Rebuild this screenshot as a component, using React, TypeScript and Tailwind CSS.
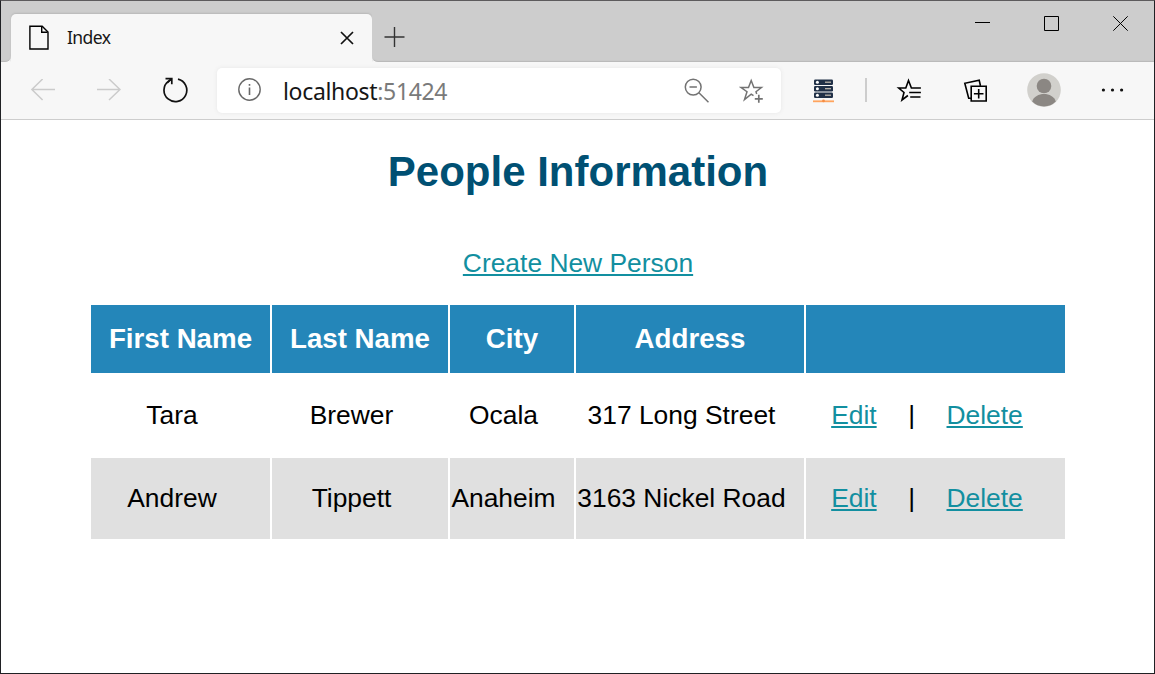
import type { ReactNode } from "react";

const people = [
  { first: "Tara", last: "Brewer", city: "Ocala", address: "317 Long Street" },
  { first: "Andrew", last: "Tippett", city: "Anaheim", address: "3163 Nickel Road" },
];

const columns = "grid grid-cols-[179px_176px_124px_228px_259px] gap-x-0.5";

function TabStrip() {
  return (
    <div className="flex h-[61px] shrink-0 bg-[#f7f7f7]">
      <div className="w-2.5 rounded-br-[6px] bg-[#cdcdcd] shadow-[inset_0_-2px_1px_-1px_#b9b9b9]" />
      <div className="w-[361px] bg-[#cdcdcd] pt-[13px]">
        <div className="flex h-full items-center rounded-t-[5px] bg-[#f7f7f7] pb-px pl-[17px] pr-[18px] shadow-[0_-1px_2px_#b8b8b8]">
          <svg width="21" height="25" viewBox="0 0 21 25" fill="none" stroke="#000" strokeWidth="1.4">
            <path d="M1.9 1.3H14.2L20 7V24H1.9Z" />
            <path d="M13.7 1.5V7.2H19.6" />
          </svg>
          <span className="ml-[18px] font-['Noto_Sans','Open_Sans',sans-serif] text-[17.5px] tracking-[-0.6px] text-[#161616]">Index</span>
          <svg className="ml-auto" width="14" height="14" viewBox="0 0 14 14" stroke="#111" strokeWidth="1.7">
            <path d="M1 1L13 13M13 1L1 13" />
          </svg>
        </div>
      </div>
      <div className="flex flex-1 rounded-bl-[6px] bg-[#cdcdcd] shadow-[inset_0_-2px_1px_-1px_#b9b9b9]">
        <svg className="ml-3 mt-[26px]" width="21" height="21" viewBox="0 0 21 21" stroke="#333" strokeWidth="1.4">
          <path d="M.5 10H20.5M10.5 0V20" />
        </svg>
        <div className="ml-auto mr-[26px] mt-[15px] flex h-4 gap-[54px]">
          <svg width="15" height="15" viewBox="0 0 15 15" stroke="#000"><path d="M0 6.5H15" /></svg>
          <svg width="15" height="15" viewBox="0 0 15 15" fill="none" stroke="#000"><path d="M.5 .5H14.5V14.5H.5Z" /></svg>
          <svg width="15" height="15" viewBox="0 0 15 15" stroke="#000" strokeWidth="1"><path d="M.3 .3L14.7 14.7M14.7 .3L.3 14.7" /></svg>
        </div>
      </div>
    </div>
  );
}

function AddressBar() {
  return (
    <div className="ml-[29px] mt-px flex h-[45px] w-[564px] items-center rounded-[5px] bg-white pl-[21px] pr-[17px] shadow-[0_0_4px_#e6e6e6]">
      <svg className="mb-0.5" width="23" height="23" viewBox="0 0 23 23" fill="none" stroke="#686868" strokeWidth="1.4">
        <circle cx="11.5" cy="11.5" r="10.7" />
        <path d="M11.5 9.5V17M11.5 6V7.7" strokeWidth="1.6" />
      </svg>
      <span className="ml-[22px] font-['Noto_Sans','Open_Sans',sans-serif] text-[23px] leading-[30px] tracking-[-0.33px] text-[#161616]">
        localhost<span className="text-[#7a7a7a]">:51424</span>
      </span>
      <svg className="ml-auto" width="25" height="25" viewBox="0 0 25 25" fill="none" stroke="#737373" strokeWidth="1.5">
        <circle cx="9.2" cy="9.1" r="7.9" />
        <path d="M5.5 9.1H12.9M14.9 14.8L24.5 24.3" />
      </svg>
      <svg className="ml-[30px]" width="25" height="25" viewBox="0 0 25 25" fill="none" stroke="#737373" strokeWidth="1.5">
        <path d="M14.5 17.6L12.2 16.1L5.5 21.5L8 13.7L2.1 9.5H9.5L12.2 2.6L14.9 9.5H22.4L17 13.7L17.7 16" />
        <path d="M15.8 20.8H23.8M19.8 16.8V24.8" strokeWidth="1.7" />
      </svg>
    </div>
  );
}

function Toolbar() {
  return (
    <div className="flex h-[58px] shrink-0 items-center border-b border-[#cdcdcd] bg-[#f7f7f7] pb-px pl-[29px]">
      <svg width="25" height="22" viewBox="0 0 25 22" fill="none" stroke="#cbcbcb" strokeWidth="1.5">
        <path d="M25 10.5H1.9M12.6 0L1.9 10.5L12.6 21" />
      </svg>
      <svg className="ml-[41px]" width="25" height="22" viewBox="0 0 25 22" fill="none" stroke="#cbcbcb" strokeWidth="1.5">
        <path d="M1 10.5H24M13 0L24 10.5L13 21" />
      </svg>
      <svg className="ml-[41px]" width="26" height="26" viewBox="0 0 26 26" fill="none" stroke="#111" strokeWidth="1.7">
        <path d="M16 2.1A11.4 11.4 0 1 1 6.5 4.1L9.5 2" />
        <path d="M3.5 1.6H9.8V7.2M9.5 2L5.2 6" />
      </svg>
      <AddressBar />
      <svg className="ml-8 mt-px" width="21" height="24" viewBox="0 0 21 24">
        {[0, 6.5, 13].map((y) => (
          <g key={y}>
            <rect x="1" y={y + 0.5} width="19" height="5.4" rx="1.2" fill="#203047" />
            <circle cx="4.4" cy={y + 3.2} r="1.5" fill="#fff" />
            <path d={`M12 ${y + 3.2}H18`} stroke="#c5bdb1" strokeWidth="1.2" />
          </g>
        ))}
        <path d="M0 22.3H21" stroke="#ffa45e" strokeWidth="1.8" />
        <circle cx="10.5" cy="21.9" r="1.4" fill="#f58d43" />
      </svg>
      <div className="ml-[31px] h-6 w-0.5 bg-[#cdcdcd]" />
      <svg className="ml-[29px]" width="25" height="24" viewBox="0 0 25 24" fill="none" stroke="#000" strokeWidth="1.6">
        <path d="M24.9 10H15.4L12.5 2.5L9.8 10H2.7L8 14.5L6 22L11.9 17.5M13.2 14.5H24.9M14.2 19H24.5" />
      </svg>
      <svg className="ml-[42px]" width="24" height="24" viewBox="0 0 24 24" fill="none" stroke="#000" strokeWidth="1.6">
        <path d="M8.2 8.3H23.2V23H8.2ZM15.7 11V20.5M10.9 15.7H20.5M17.4 7.5L16.2 2.2L1.8 5.3L5.7 20.2H7.7" />
      </svg>
      <svg className="ml-10" width="34" height="34" viewBox="0 0 34 34">
        <circle cx="17" cy="17" r="16.8" fill="#d1d0cc" />
        <circle cx="17" cy="13" r="7.3" fill="#8b8783" />
        <path d="M5.2 28.6C8 18.6 26 18.6 28.8 28.6A16.8 16.8 0 0 1 5.2 28.6Z" fill="#8b8783" />
      </svg>
      <svg className="ml-[39px]" width="24" height="4" viewBox="0 0 24 4" fill="#111">
        <circle cx="3.4" cy="2" r="1.6" /><circle cx="12.5" cy="2" r="1.6" /><circle cx="21.6" cy="2" r="1.6" />
      </svg>
    </div>
  );
}

function Cell({ children, shaded }: { children: ReactNode; shaded: boolean }) {
  return (
    <div className={`flex items-center justify-center whitespace-nowrap pr-4 ${shaded ? "bg-[#e0e0e0]" : "bg-white"}`}>
      {children}
    </div>
  );
}

function TextLink({ children }: { children: ReactNode }) {
  return (
    <a href="#" className="text-[#128fa0] underline decoration-2 underline-offset-[2px]">
      {children}
    </a>
  );
}

export default function App() {
  return (
    <div className="flex h-[674px] w-[1155px] flex-col overflow-hidden border border-[#202124] border-t-[#5d5b5d] bg-white">
      <TabStrip />
      <Toolbar />
      <main className="flex flex-col items-center font-['Liberation_Sans',Arial,sans-serif] text-[26.4px] text-black">
        <h1 className="mt-[26px] pl-px text-[42px] font-bold leading-[52px] text-[#005073]">People Information</h1>
        <div className="mt-[50px] pl-px leading-[30px]"><TextLink>Create New Person</TextLink></div>
        <div className="mt-[27px] flex w-[974px] flex-col gap-0.5">
          <div className={`${columns} h-[68px] text-[27.7px] font-bold text-white`}>
            {["First Name", "Last Name", "City", "Address", ""].map((name) => (
              <div key={name} className="flex items-center justify-center bg-[#2486b9] pl-px">{name}</div>
            ))}
          </div>
          {people.map((p, i) => (
            <div key={p.first} className={`${columns} h-[81px]`}>
              <Cell shaded={i % 2 === 1}>{p.first}</Cell>
              <Cell shaded={i % 2 === 1}>{p.last}</Cell>
              <Cell shaded={i % 2 === 1}>{p.city}</Cell>
              <Cell shaded={i % 2 === 1}>{p.address}</Cell>
              <Cell shaded={i % 2 === 1}>
                <span className="flex gap-[31.5px]">
                  <TextLink>Edit</TextLink><span>|</span><TextLink>Delete</TextLink>
                </span>
              </Cell>
            </div>
          ))}
        </div>
      </main>
    </div>
  );
}
